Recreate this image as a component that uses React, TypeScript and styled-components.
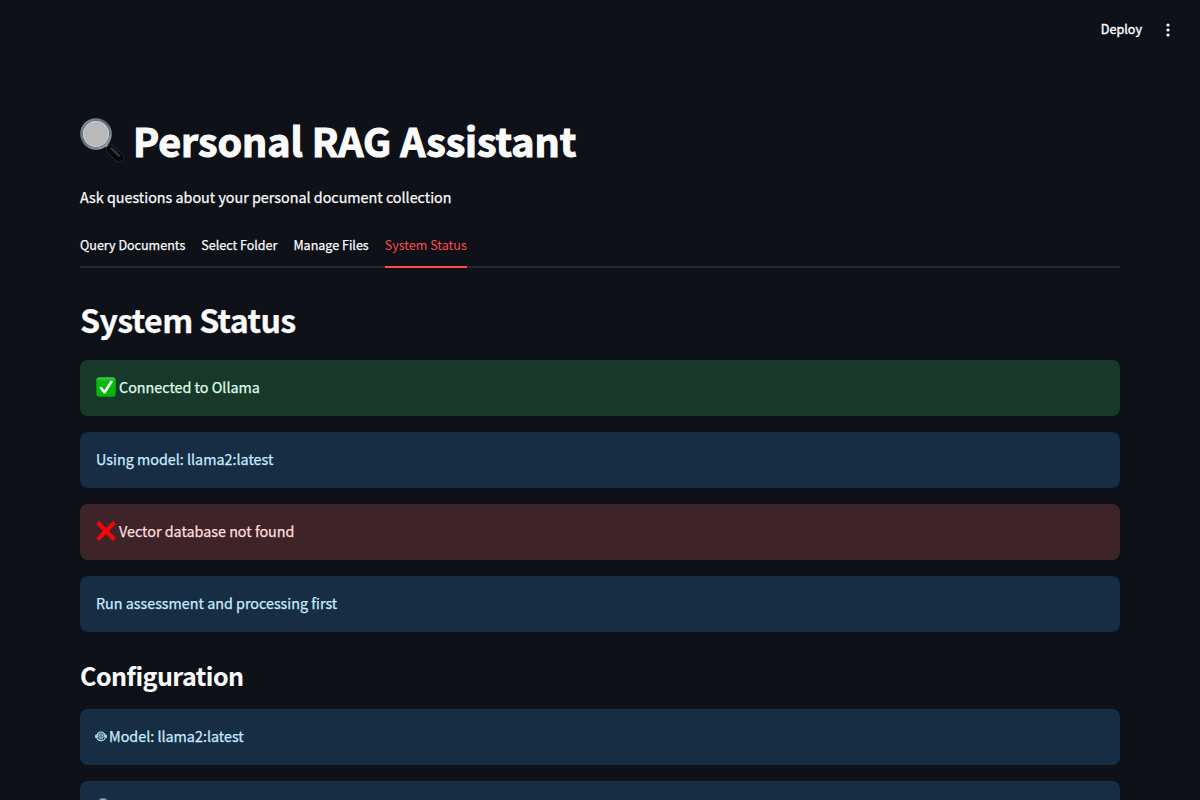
import React from "react";
import styled, { createGlobalStyle, css } from "styled-components";

const GlobalStyle = createGlobalStyle`
  * { box-sizing: border-box; }
  body {
    margin: 0;
    background: #0e1117;
    color: #fafafa;
    font-family: "Source Sans Pro", "Noto Sans CJK SC", "Noto Sans", sans-serif;
    font-size: 14.33px;
    line-height: 24px;
    -webkit-text-stroke: 0.25px currentColor;
    overflow: hidden;
  }
`;

const Page = styled.div`
  height: 100vh;
  overflow: hidden;
  display: flex;
  flex-direction: column;
`;

const Toolbar = styled.header`
  height: 60px;
  flex: none;
  display: flex;
  align-items: center;
  justify-content: flex-end;
  gap: 18px;
  padding-right: 24px;
`;

const DeployButton = styled.button`
  border: 0;
  padding: 0 0 2px;
  background: none;
  color: #fafafa;
  font: inherit;
  font-size: 12.6px;
  line-height: 20px;
  -webkit-text-stroke: 0.4px currentColor;
`;

const MenuButton = styled.button`
  border: 0;
  padding: 0;
  width: 16px;
  height: 20px;
  background: none;
  display: flex;
  align-items: center;
  justify-content: center;
`;

const Main = styled.main`
  flex: none;
  padding: 53px 80px 0;
  display: flex;
  flex-direction: column;
`;

const Title = styled.h1`
  margin: 0;
  height: 53px;
  display: flex;
  align-items: center;
  gap: 8px;
  font-size: 39.4px;
  font-weight: 700;
  line-height: 53px;
  letter-spacing: -0.03px;
  white-space: nowrap;
  -webkit-text-stroke: 1.1px currentColor;

  > svg {
    margin-top: 2px;
  }
`;

const Intro = styled.p`
  margin: 19px 0 0;
  line-height: 24px;
`;

const TabList = styled.nav`
  margin-top: 17px;
  height: 42px;
  display: flex;
  gap: 16px;
  box-shadow: inset 0 -2px #262830;
`;

const Tab = styled.button<{ $active?: boolean }>`
  border: 0;
  padding: 0 0 5px;
  background: none;
  color: ${(p) => (p.$active ? "#ff4b4b" : "#fafafa")};
  font: inherit;
  font-size: 12.54px;
  line-height: 36px;
  white-space: nowrap;
  ${(p) =>
    p.$active &&
    css`
      box-shadow: inset 0 -2px #ff4b4b;
      -webkit-text-stroke-width: 0;
    `}
`;

const SectionTitle = styled.h2`
  margin: 30px 0 19px;
  font-size: 32.2px;
  font-weight: 600;
  line-height: 43px;
  letter-spacing: -0.65px;
`;

const SubTitle = styled.h3`
  margin: 26px 0 17px;
  font-size: 25.05px;
  font-weight: 600;
  line-height: 34px;
  letter-spacing: -0.52px;
  -webkit-text-stroke-width: 0.1px;
`;

const AlertStack = styled.section`
  display: flex;
  flex-direction: column;
  gap: 16px;
`;

const tones = {
  success: { background: "#183929", color: "#dffde9" },
  info: { background: "#172d43", color: "#c7ebff" },
  error: { background: "#3e2428", color: "#ffdede" },
};

const Alert = styled.div<{ $tone: keyof typeof tones }>`
  height: 56px;
  padding: 0 16px 2px;
  border-radius: 8px;
  display: flex;
  align-items: center;
  gap: 3px;
  background: ${(p) => tones[p.$tone].background};
  color: ${(p) => tones[p.$tone].color};
`;

const Icon = styled.svg`
  flex: none;
  display: block;
`;

const RobotIcon = styled(Icon)`
  margin-left: -1px;
  margin-right: -1px;
`;

const Magnifier = ({ size }: { size: number }) => (
  <Icon width={size} height={size} viewBox="0 0 45 45">
    <defs>
      <linearGradient id="rim" x1="0" y1="0" x2="0.8" y2="1">
        <stop offset="0" stopColor="#83a2bc" />
        <stop offset="0.45" stopColor="#59636b" />
        <stop offset="1" stopColor="#98a3aa" />
      </linearGradient>
    </defs>
    <path d="M26 27l5 5" stroke="#858b8f" strokeWidth="3" />
    <path d="M30.5 31.5l8.7 8" stroke="#33373b" strokeWidth="9.4" strokeLinecap="round" />
    <path d="M30.5 31.5l8.7 8" stroke="#050608" strokeWidth="8.4" strokeLinecap="round" />
    <path d="M31.5 30.5l7.6 7.2" stroke="#303438" strokeWidth="2.6" strokeLinecap="round" />
    <circle cx="16" cy="16" r="14.8" fill="#b9b9bb" stroke="url(#rim)" strokeWidth="2" />
    <circle cx="16" cy="16" r="13.5" fill="none" stroke="#474c52" strokeWidth="0.8" />
    <circle cx="16" cy="16" r="12.7" fill="none" stroke="#d2d3d4" strokeWidth="0.9" />
  </Icon>
);

const CheckMark = () => (
  <Icon width="20" height="20" viewBox="0 0 20 20">
    <defs>
      <linearGradient id="check" x1="0" y1="0" x2="0" y2="1">
        <stop offset="0" stopColor="#43cf43" />
        <stop offset="0.2" stopColor="#08b914" />
        <stop offset="1" stopColor="#00b800" />
      </linearGradient>
    </defs>
    <rect x="0.3" y="0.3" width="19.4" height="19.4" rx="3.2" fill="url(#check)" />
    <path d="M3.2 10.8l2.2-1.4 3 3.8 6.2-9.7 2.4 1.1-7.6 12h-1.7z" fill="#fff" />
  </Icon>
);

const CrossMark = () => (
  <Icon width="20" height="20" viewBox="0 0 20 20">
    <path d="M1.6 1.6l16.8 16.8M18.4 1.6L1.6 18.4" stroke="#f50505" strokeWidth="4.2" />
  </Icon>
);

const Robot = () => (
  <RobotIcon width="12" height="12" viewBox="0 0 12 12" fill="none" stroke="currentColor">
    <ellipse cx="6" cy="6.4" rx="4.3" ry="4.4" strokeWidth="1.1" />
    <rect x="2.4" y="4.1" width="7.2" height="3" rx="1.3" strokeWidth="1" />
    <path d="M.9 4.8v3.2M11.1 4.8v3.2" strokeWidth="1.4" />
    <path d="M3.8 5.6h1.7M6.6 5.6h1.7M4.2 8.9h3.6" strokeWidth="1" />
  </RobotIcon>
);

const tabs = ["Query Documents", "Select Folder", "Manage Files", "System Status"];

export default function App() {
  return (
    <Page>
      <GlobalStyle />
      <Toolbar>
        <DeployButton>Deploy</DeployButton>
        <MenuButton aria-label="Menu">
          <Icon width="4" height="14" viewBox="0 0 4 14" fill="#fafafa">
            <circle cx="2" cy="2" r="1.6" />
            <circle cx="2" cy="7" r="1.6" />
            <circle cx="2" cy="12" r="1.6" />
          </Icon>
        </MenuButton>
      </Toolbar>
      <Main>
        <Title>
          <Magnifier size={45} />
          <span>Personal RAG Assistant</span>
        </Title>
        <Intro>Ask questions about your personal document collection</Intro>
        <TabList>
          {tabs.map((name) => (
            <Tab key={name} $active={name === "System Status"}>
              {name}
            </Tab>
          ))}
        </TabList>
        <SectionTitle>System Status</SectionTitle>
        <AlertStack>
          <Alert $tone="success">
            <CheckMark />
            <span>Connected to Ollama</span>
          </Alert>
          <Alert $tone="info">Using model: llama2:latest</Alert>
          <Alert $tone="error">
            <CrossMark />
            <span>Vector database not found</span>
          </Alert>
          <Alert $tone="info">Run assessment and processing first</Alert>
        </AlertStack>
        <SubTitle>Configuration</SubTitle>
        <AlertStack>
          <Alert $tone="info">
            <Robot />
            <span>Model: llama2:latest</span>
          </Alert>
          <Alert $tone="info">
            <Magnifier size={20} />
          </Alert>
        </AlertStack>
      </Main>
    </Page>
  );
}
